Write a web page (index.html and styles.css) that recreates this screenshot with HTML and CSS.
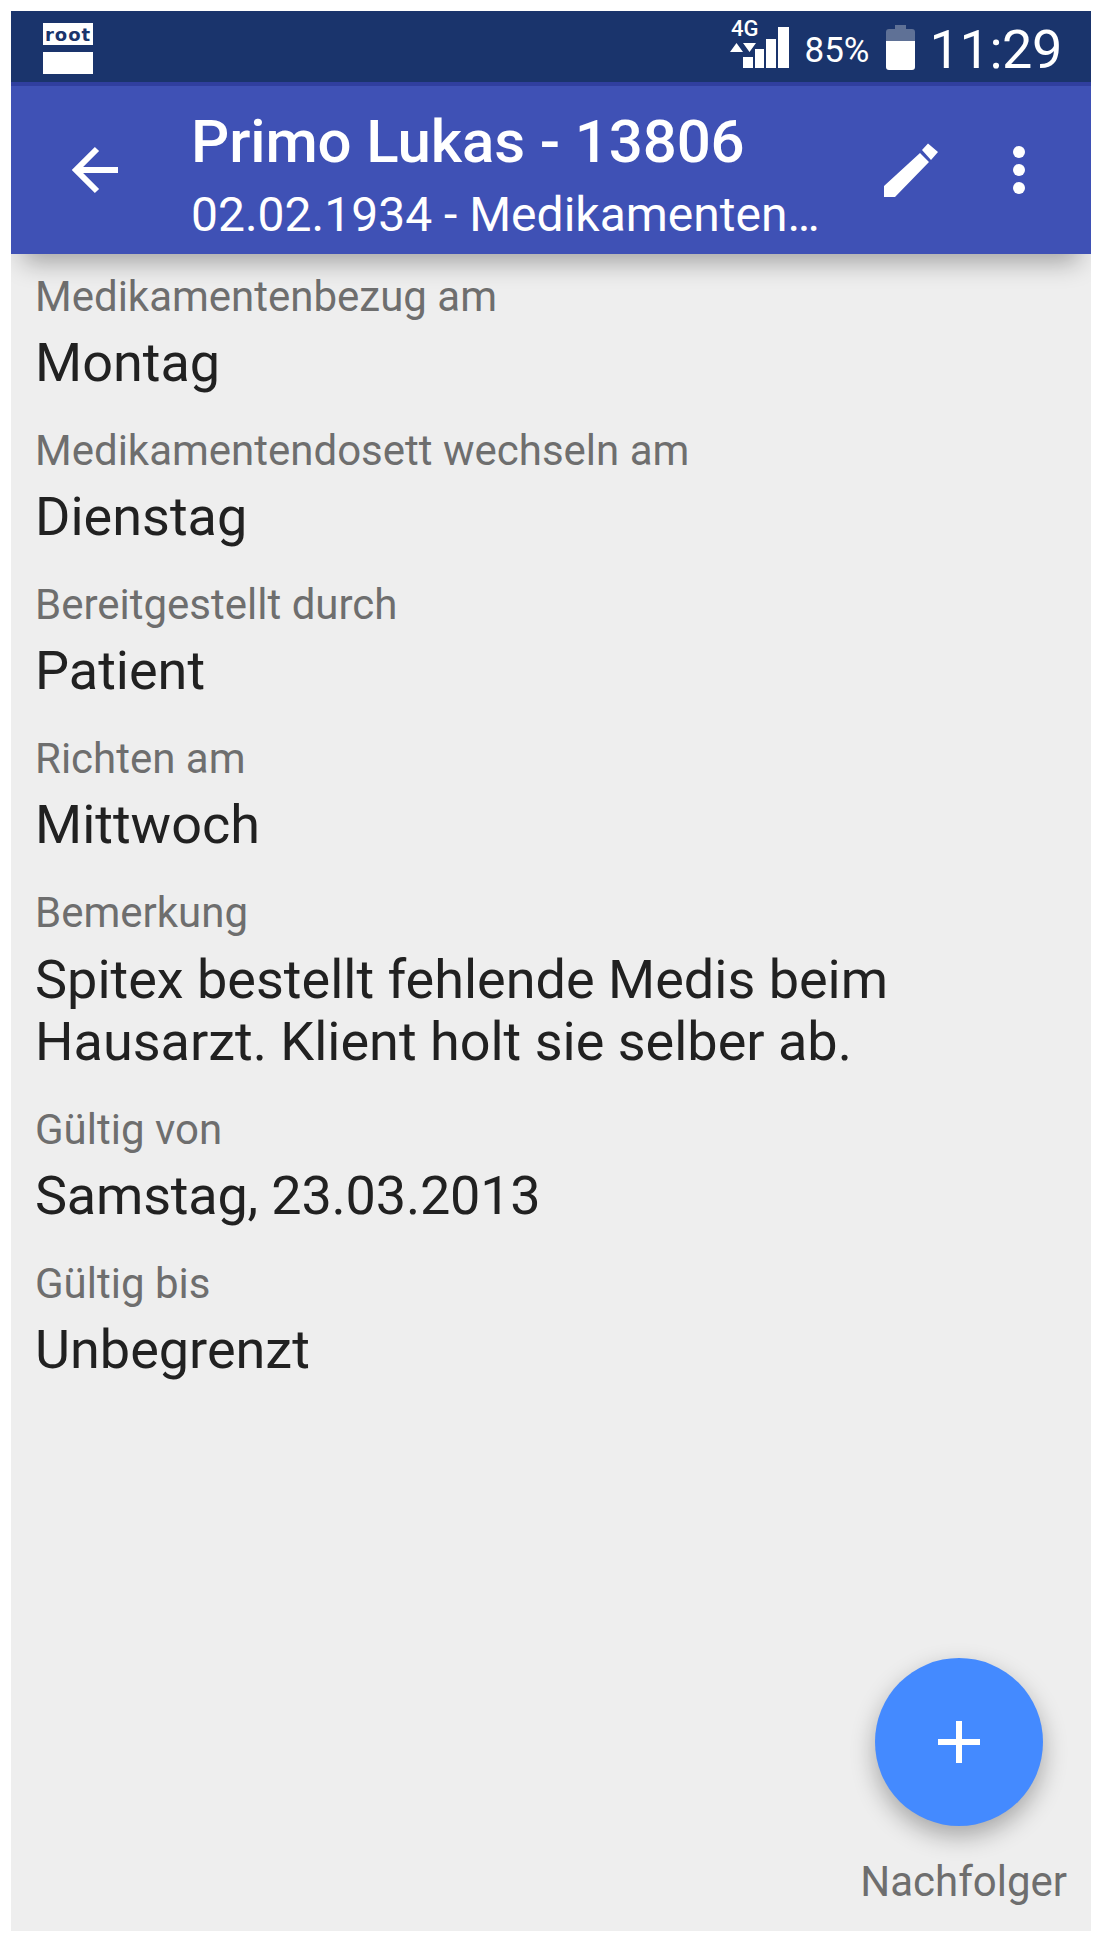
FILE: index.html
```html
<!DOCTYPE html>
<html lang="de">

<head>
    <meta charset="UTF-8">
    <meta name="viewport" content="width=device-width, initial-scale=1.0">
    <title>Primo Lukas - 13806</title>
    <link rel="stylesheet" href="styles.css">
</head>

<body>
    <div class="phone">
        <div class="status-bar">
            <div class="root-logo">
                <div class="root-word">root</div>
                <div class="root-block"></div>
            </div>
            <div class="status-right">
                <svg class="signal" width="62" height="56" viewBox="0 -4 62 56">
                    <text x="2" y="18" class="net-label">4G</text>
                    <path d="M1 34L7.500 25L14 34Z M14 25H27L20.500 34Z" fill="#fff" />
                    <path d="M14 39h10v11h-10z M26 31h9v19h-9z M37 21h10v29h-10z M49 9h11v41h-11z" fill="#fff" />
                </svg>
                <span class="battery-pct">85%</span>
                <svg class="battery" width="29" height="45" viewBox="0 0 29 45">
                    <path d="M9 0h11v4h6q3 0 3 3v9h-29v-9q0-3 3-3h6z" fill="#5f7196" />
                    <path d="M0 16h29v26q0 3-3 3h-23q-3 0-3-3z" fill="#fff" />
                </svg>
                <span class="clock">11:29</span>
            </div>
        </div>

        <div class="app-bar">
            <svg class="back-icon" width="48" height="48" viewBox="0 0 48 48">
                <path d="M47 24H4 M26 3L5 24l21 21" fill="none" stroke="#fff" stroke-width="6" />
            </svg>
            <div class="titles">
                <div class="title">Primo Lukas - 13806</div>
                <div class="subtitle">02.02.1934 - Medikamenten…</div>
            </div>
            <svg class="edit-icon" width="54" height="54" viewBox="0 0 54 54">
                <path d="M0 54V43L36 10L45 19L11 54Z M38 7L44 0.500L54 9L47 17Z" fill="#fff" />
            </svg>
            <div class="more-icon">
                <span></span><span></span><span></span>
            </div>
        </div>

        <div class="details">
            <div class="field">
                <div class="field-label">Medikamentenbezug am</div>
                <div class="field-value">Montag</div>
            </div>
            <div class="field">
                <div class="field-label">Medikamentendosett wechseln am</div>
                <div class="field-value">Dienstag</div>
            </div>
            <div class="field">
                <div class="field-label">Bereitgestellt durch</div>
                <div class="field-value">Patient</div>
            </div>
            <div class="field">
                <div class="field-label">Richten am</div>
                <div class="field-value">Mittwoch</div>
            </div>
            <div class="field">
                <div class="field-label">Bemerkung</div>
                <div class="field-value field-note">Spitex bestellt fehlende Medis beim<br>Hausarzt. Klient holt sie selber ab.</div>
            </div>
            <div class="field">
                <div class="field-label">Gültig von</div>
                <div class="field-value field-date">Samstag, 23.03.2013</div>
            </div>
            <div class="field">
                <div class="field-label">Gültig bis</div>
                <div class="field-value">Unbegrenzt</div>
            </div>
        </div>

        <div class="fab-wrap">
            <div class="fab">
                <svg width="42" height="42" viewBox="0 0 42 42">
                    <path d="M21 0V42 M0 21H42" stroke="#fff" stroke-width="6" />
                </svg>
            </div>
            <div class="fab-label">Nachfolger</div>
        </div>
    </div>
</body>

</html>
```

FILE: styles.css
```css
html,
body {
    margin: 0;
    background-color: #ffffff;
}

.phone {
    position: relative;
    width: 1080px;
    height: 1920px;
    margin: 11px 12px 12px 11px;
    background-color: #eeeeee;
    font-family: Roboto, "Noto Sans", sans-serif;
    overflow: hidden;
}

/* status bar */
.status-bar {
    display: flex;
    justify-content: space-between;
    height: 71px;
    background-color: #1a346c;
    color: #ffffff;
}

.root-logo {
    width: 50px;
    margin: 12px 0 0 32px;
}

.root-word {
    height: 22px;
    background-color: #ffffff;
    color: #1a346c;
    font-family: "DejaVu Sans", sans-serif;
    font-weight: bold;
    font-size: 18px;
    line-height: 23px;
    letter-spacing: 1px;
    text-align: center;
    overflow: hidden;
}

.root-block {
    height: 22px;
    margin-top: 7px;
    background-color: #ffffff;
}

.status-right {
    display: flex;
    align-items: flex-start;
    padding-right: 29px;
}

.signal {
    margin: 3px 1px 0 0;
}

.net-label {
    font-family: Roboto, sans-serif;
    font-size: 22px;
    font-weight: 500;
    fill: #ffffff;
}

.battery-pct {
    margin: 20px 0 0 13px;
    font-size: 35px;
    line-height: 40px;
}

.battery {
    margin: 14px 0 0 16px;
}

.clock {
    margin: 9px 0 0 15px;
    font-size: 54px;
    line-height: 60px;
    letter-spacing: -0.4px;
}

/* app bar */
.app-bar {
    position: relative;
    display: flex;
    align-items: center;
    height: 168px;
    border-top: 4px solid #303f9f;
    background-color: #3f51b5;
    color: #ffffff;
    box-shadow: 0 20px 24px -12px rgba(0, 0, 0, 0.32);
}

.back-icon {
    flex: none;
    margin-left: 60px;
}

.titles {
    flex: none;
    width: 693px;
    margin-left: 72px;
    padding-top: 18px;
}

.title {
    font-size: 60px;
    font-weight: 500;
    line-height: 72px;
    letter-spacing: -0.13px;
}

.subtitle {
    font-size: 48px;
    line-height: 74px;
}

.edit-icon {
    flex: none;
}

.more-icon {
    display: flex;
    flex-direction: column;
    gap: 6px;
    margin-left: 75px;
}

.more-icon span {
    width: 12px;
    height: 12px;
    border-radius: 50%;
    background-color: #ffffff;
}

/* detail list */
.details {
    padding: 15px 24px 0 24px;
}

.field {
    margin-bottom: 29px;
}

.field-label {
    margin-bottom: 7px;
    color: #6e6e6e;
    font-size: 42px;
    line-height: 56px;
}

.field-value {
    color: #212121;
    font-size: 54px;
    line-height: 62px;
}

.field-note {
    padding-top: 1px;
}

.field-date {
    letter-spacing: -0.2px;
}

/* floating button */
.fab-wrap {
    position: absolute;
    right: 24px;
    bottom: 24px;
    display: flex;
    flex-direction: column;
    align-items: flex-end;
}

.fab {
    display: flex;
    align-items: center;
    justify-content: center;
    width: 168px;
    height: 168px;
    margin-right: 24px;
    border-radius: 50%;
    background-color: #448aff;
    box-shadow: 0 10px 24px rgba(0, 0, 0, 0.3);
}

.fab-label {
    margin-top: 31px;
    color: #6e6e6e;
    font-size: 42px;
    line-height: 50px;
}
```
